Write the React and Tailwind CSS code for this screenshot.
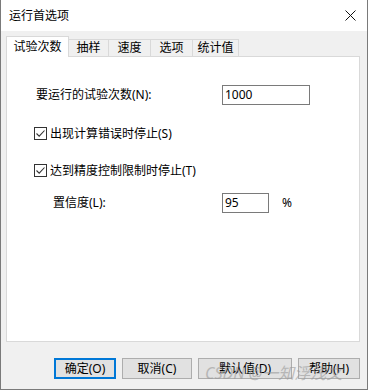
import React from 'react';

const font = { fontFamily: '"Segoe UI", "Noto Sans", "Noto Sans CJK SC", sans-serif' };

function CheckBox() {
    return (
        <svg width="13" height="13" viewBox="0 0 13 13" className="shrink-0">
            <rect x="0.5" y="0.5" width="12" height="12" fill="white" stroke="#333333" />
            <path d="M2.5 6.5 L5.2 9.2 L10.5 3.5" fill="none" stroke="#333333" strokeWidth="1.1" />
        </svg>
    );
}

function Tab({ label, active, width }) {
    if (active) {
        return (
            <div
                className="h-[21px] -mb-px relative z-10 bg-white border-l border-t border-r border-[#d9d9d9] flex items-center justify-center text-[12px] text-black"
                style={{ width }}
            >
                {label}
            </div>
        );
    }
    return (
        <div
            className="h-[17px] bg-[#f0f0f0] border-t border-r border-[#d9d9d9] flex items-center justify-center text-[12px] text-black"
            style={{ width }}
        >
            {label}
        </div>
    );
}

function Button({ label, hot, primary, width }) {
    return (
        <div
            className={
                'h-[21px] bg-[#e1e1e1] flex items-center justify-center text-[12px] text-black ' +
                (primary ? 'border-2 border-[#0078d7]' : 'border border-[#adadad]')
            }
            style={{ width }}
        >
            {label}({hot})
        </div>
    );
}

export default function App() {
    const tabs = [
        { label: '试验次数', width: 63, active: true },
        { label: '抽样', width: 40 },
        { label: '速度', width: 42 },
        { label: '选项', width: 42 },
        { label: '统计值', width: 46 },
    ];

    return (
        <div className="w-[368px] h-[390px] flex flex-col border-x border-b border-[#7a7a7a] bg-[#f0f0f0] relative overflow-hidden" style={font}>
            {/* title bar */}
            <div className="h-[31px] bg-white flex items-center pl-[8px] pr-[11px] shrink-0">
                <span className="text-[12px] text-black">运行首选项</span>
                <svg width="11" height="11" viewBox="0 0 11 11" className="ml-auto">
                    <path d="M0.5 0.5 L10.5 10.5 M10.5 0.5 L0.5 10.5" stroke="#111" strokeWidth="1" />
                </svg>
            </div>

            <div className="flex-1 px-[5px] pt-[5px] flex flex-col">
                <div className="h-[20px] flex items-end">
                    {tabs.map(t => (
                        <Tab key={t.label} {...t} />
                    ))}
                </div>

                <div className="w-[354px] h-[286px] bg-white border border-[#d9d9d9] text-[12px] text-black">
                    <div className="flex items-center mt-[28px] pl-[29px]">
                        <span className="w-[186px]">要运行的试验次数(N):</span>
                        <div className="w-[88px] h-[20px] border border-[#7a7a7a] flex items-center pl-[2px]">1000</div>
                    </div>

                    <div className="flex items-center gap-[3px] mt-[22px] pl-[27px] h-[13px]">
                        <CheckBox />
                        <span>出现计算错误时停止(S)</span>
                    </div>

                    <div className="flex items-center gap-[3px] mt-[24px] pl-[27px] h-[13px]">
                        <CheckBox />
                        <span>达到精度控制限制时停止(T)</span>
                    </div>

                    <div className="flex items-center mt-[16px] pl-[46px]">
                        <span className="w-[169px]">置信度(L):</span>
                        <div className="w-[47px] h-[20px] border border-[#7a7a7a] flex items-center pl-[2px]">95</div>
                        <span className="ml-[13px]">%</span>
                    </div>
                </div>

                <div className="flex mt-[16px] pl-[48px] gap-[6px]">
                    <Button label="确定" hot="O" primary width={62} />
                    <Button label="取消" hot="C" width={70} />
                    <Button label="默认值" hot="D" width={94} />
                    <Button label="帮助" hot="H" width={62} />
                </div>
            </div>

            {/* CSDN watermark over the buttons */}
            <div className="absolute left-[204px] top-[361px] text-[16px] italic text-[#9a9a9a] opacity-60 pointer-events-none whitespace-nowrap">
                CSDN @一知浮浅文
            </div>
        </div>
    );
}
